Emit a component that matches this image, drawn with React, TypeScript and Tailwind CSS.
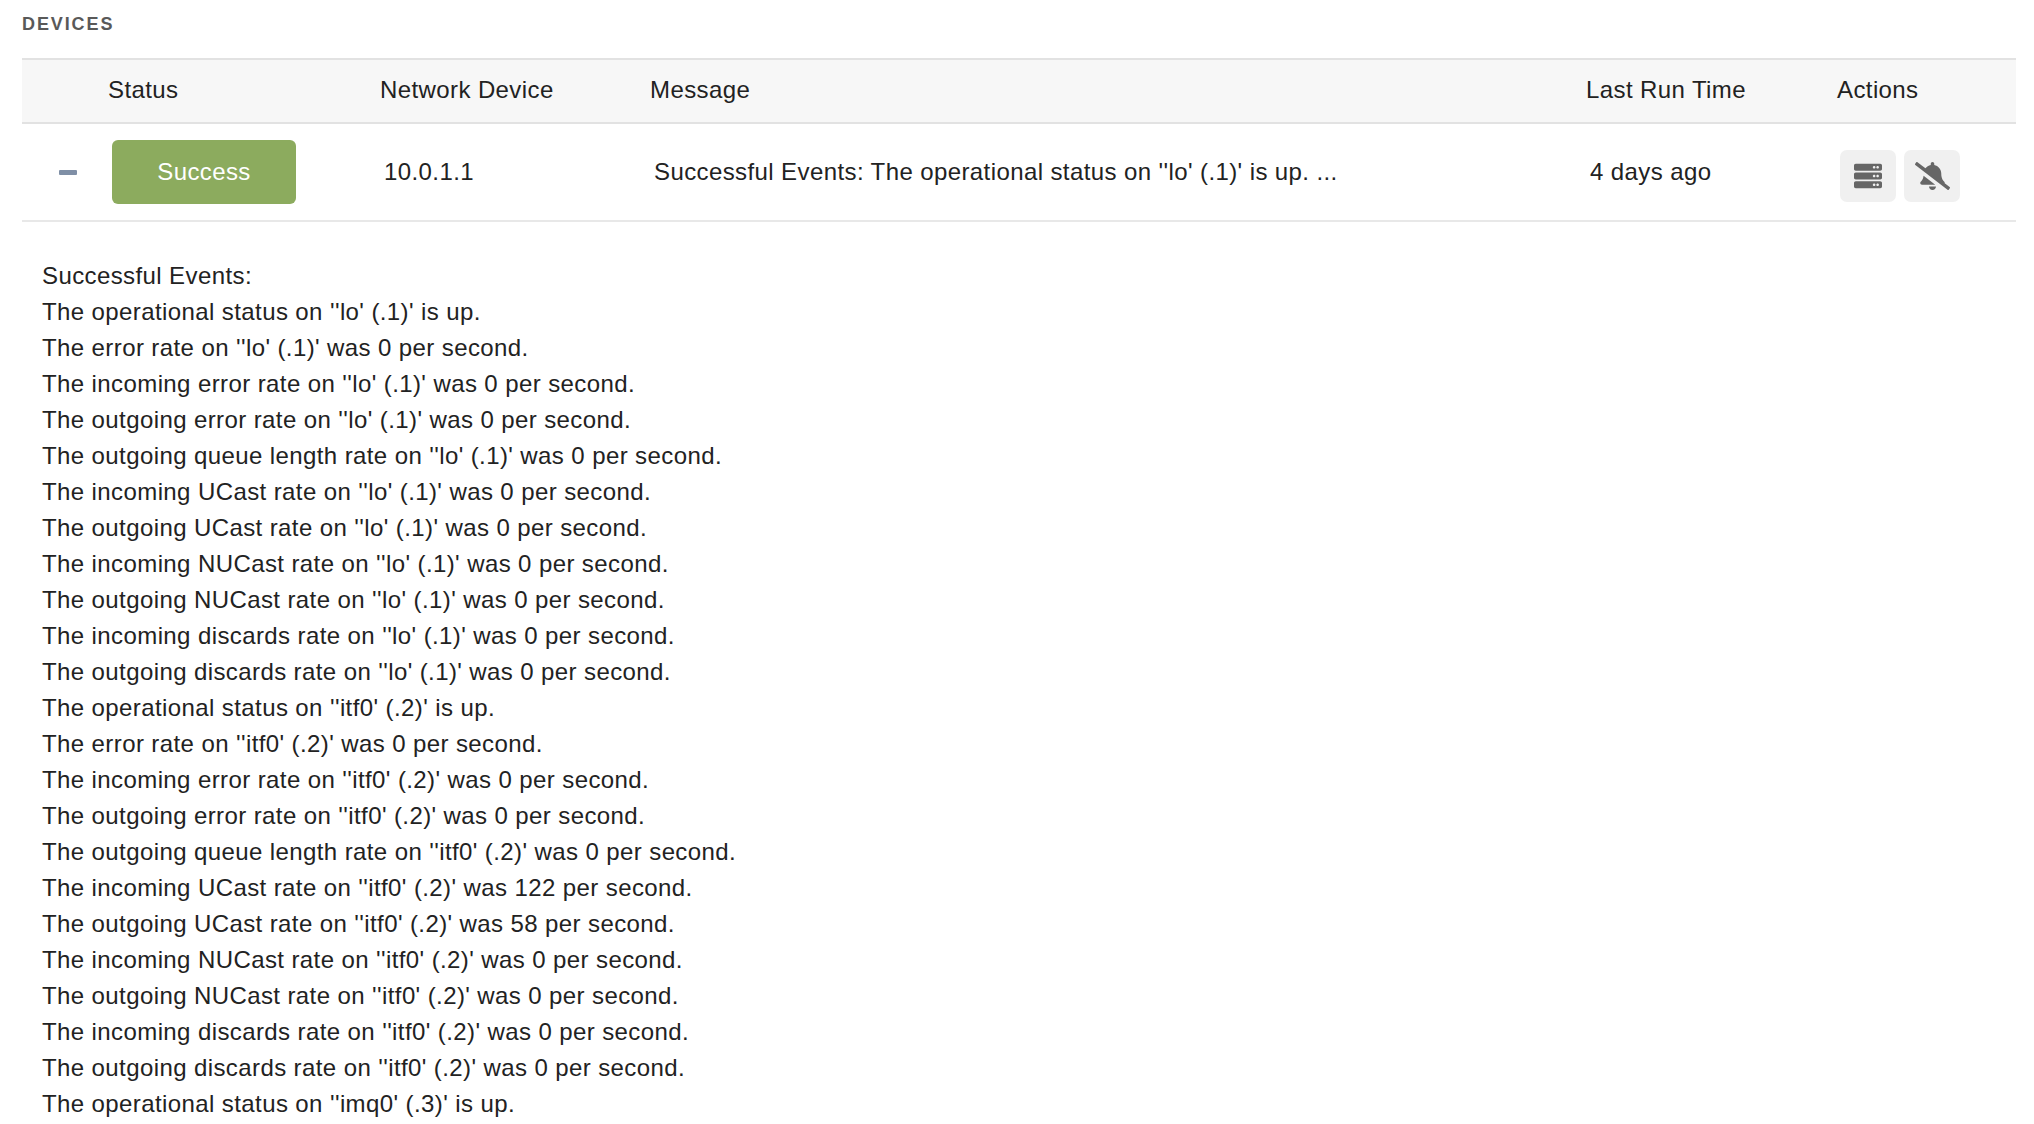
import React from 'react';
import { FaServer, FaBellSlash } from 'react-icons/fa';

const lines = [
  "Successful Events:",
  "The operational status on ''lo' (.1)' is up.",
  "The error rate on ''lo' (.1)' was 0 per second.",
  "The incoming error rate on ''lo' (.1)' was 0 per second.",
  "The outgoing error rate on ''lo' (.1)' was 0 per second.",
  "The outgoing queue length rate on ''lo' (.1)' was 0 per second.",
  "The incoming UCast rate on ''lo' (.1)' was 0 per second.",
  "The outgoing UCast rate on ''lo' (.1)' was 0 per second.",
  "The incoming NUCast rate on ''lo' (.1)' was 0 per second.",
  "The outgoing NUCast rate on ''lo' (.1)' was 0 per second.",
  "The incoming discards rate on ''lo' (.1)' was 0 per second.",
  "The outgoing discards rate on ''lo' (.1)' was 0 per second.",
  "The operational status on ''itf0' (.2)' is up.",
  "The error rate on ''itf0' (.2)' was 0 per second.",
  "The incoming error rate on ''itf0' (.2)' was 0 per second.",
  "The outgoing error rate on ''itf0' (.2)' was 0 per second.",
  "The outgoing queue length rate on ''itf0' (.2)' was 0 per second.",
  "The incoming UCast rate on ''itf0' (.2)' was 122 per second.",
  "The outgoing UCast rate on ''itf0' (.2)' was 58 per second.",
  "The incoming NUCast rate on ''itf0' (.2)' was 0 per second.",
  "The outgoing NUCast rate on ''itf0' (.2)' was 0 per second.",
  "The incoming discards rate on ''itf0' (.2)' was 0 per second.",
  "The outgoing discards rate on ''itf0' (.2)' was 0 per second.",
  "The operational status on ''imq0' (.3)' is up.",
];

const gridCols = 'grid grid-cols-[86px_272px_270px_936px_251px_179px]';

export default function App() {
  return (
    <div className="h-screen overflow-hidden bg-white px-[22px] font-['Liberation_Sans',Arial,sans-serif] text-[24px] leading-[36px] tracking-[0.4px] text-[#222]">
      <h2 className="pt-[12px] text-[18px] leading-[24px] font-bold tracking-[1.9px] text-[#595959]">DEVICES</h2>

      <div className={`${gridCols} mt-[22px] h-[66px] w-[1994px] items-center border-y-2 border-[#e2e2e2] bg-[#f7f7f7] pb-[2px]`}>
        <div />
        <div>Status</div>
        <div>Network Device</div>
        <div>Message</div>
        <div>Last Run Time</div>
        <div>Actions</div>
      </div>

      <div className={`${gridCols} h-[98px] w-[1994px] items-center border-b-2 border-[#e8e8e8]`}>
        <div className="flex justify-center pl-[5px]">
          <span className="h-[5px] w-[18px] rounded-[1px] bg-[#7f8fa6]" />
        </div>
        <div className="pl-1">
          <div className="flex h-[64px] w-[184px] items-center justify-center rounded-[6px] bg-[#8cab5e] text-white">
            Success
          </div>
        </div>
        <div className="pl-1">10.0.1.1</div>
        <div className="pl-1">Successful Events: The operational status on ''lo' (.1)' is up. ...</div>
        <div className="pl-1">4 days ago</div>
        <div className="mt-2 flex gap-2 pl-[3px]">
          <button className="flex h-[52px] w-[56px] items-center justify-center rounded-[7px] bg-[#f0f0f0] text-[#666]">
            <FaServer size={28} />
          </button>
          <button className="flex h-[52px] w-[56px] items-center justify-center rounded-[7px] bg-[#f0f0f0] text-[#666]">
            <FaBellSlash className="h-[28px] w-[35px]" />
          </button>
        </div>
      </div>

      <div className="pt-[36px] pl-[20px]">
        {lines.map((line, i) => (
          <div key={i}>{line}</div>
        ))}
      </div>
    </div>
  );
}
